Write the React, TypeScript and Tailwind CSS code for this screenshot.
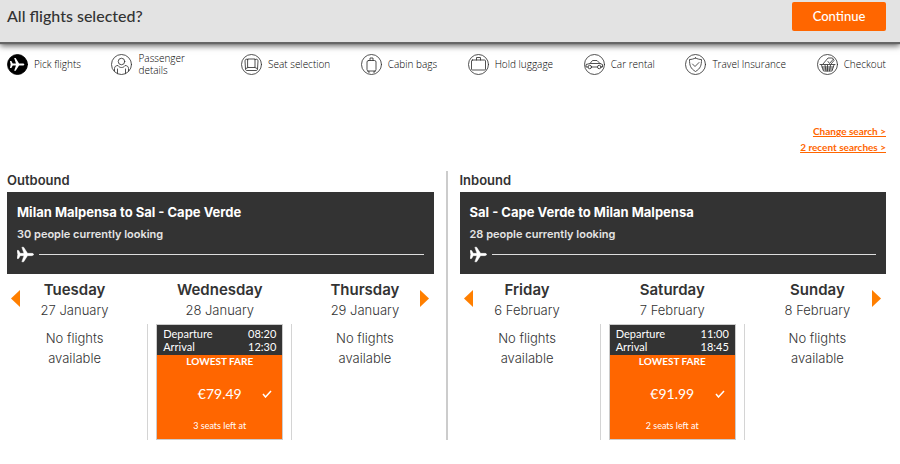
import type { ReactNode } from "react";

const PLANE =
  "M1 7h2l2 3.600h4.600L7 3h2.200l4.800 7.600h5.200c1.200 0 2.300.500 2.300 1.400s-1.100 1.400-2.300 1.400H14L9.200 21H7l2.600-7.600H5L3 17H1l1-5z";

function Plane({ className }: { className: string }) {
  return (
    <svg viewBox="1 2 21 20" className={className} fill="currentColor" stroke="currentColor" strokeWidth="0.600" aria-hidden="true">
      <path d={PLANE} />
    </svg>
  );
}

function RoundIcon({ children, filled = false }: { children?: ReactNode; filled?: boolean }) {
  return (
    <svg
      viewBox="0 0 42 42"
      className="size-[21px] shrink-0 text-[#333]"
      fill="none"
      stroke="currentColor"
      strokeWidth="1.700"
      strokeLinejoin="round"
      strokeLinecap="round"
      aria-hidden="true"
    >
      <circle cx="21" cy="21" r="20" fill={filled ? "#000" : "none"} stroke={filled ? "#000" : "currentColor"} />
      {children}
    </svg>
  );
}

const steps: { label: string; width?: string; icon: ReactNode }[] = [
  {
    label: "Pick flights",
    icon: (
      <RoundIcon filled>
        <path d={PLANE} transform="translate(4.500 4) scale(1.400)" fill="#fff" stroke="none" />
      </RoundIcon>
    ),
  },
  {
    label: "Passenger details",
    width: "w-[72px]",
    icon: (
      <RoundIcon>
        <circle cx="21" cy="15" r="6.500" />
        <path d="M7 34v-5c0-4 3-6 7-6 2 3 4 4 7 4s5-1 7-4c4 0 7 2 7 6v5M13 30v9M29 30v9" />
      </RoundIcon>
    ),
  },
  {
    label: "Seat selection",
    icon: (
      <RoundIcon>
        <path d="M14 10h14v17H14zM14 11c-4-2-6 0-6 3l1 16c0 2 1 3 3 3h18c2 0 3-1 3-3l1-16c0-3-2-5-6-3M10 29l4-2M32 29l-4-2" />
      </RoundIcon>
    ),
  },
  {
    label: "Cabin bags",
    icon: (
      <RoundIcon>
        <rect x="12" y="13" width="18" height="21" rx="3" />
        <path d="M18 13V8h6v5M14 34v2h3M28 34v2h-3" />
      </RoundIcon>
    ),
  },
  {
    label: "Hold luggage",
    icon: (
      <RoundIcon>
        <rect x="7" y="12" width="28" height="20" rx="2" />
        <path d="M17 12V7h8v5" />
      </RoundIcon>
    ),
  },
  {
    label: "Car rental",
    icon: (
      <RoundIcon>
        <path d="M8 26H4v-5l8-2 5-6h9l6 6 5 2v5h-3M15 26h12M13 19h19" />
        <circle cx="11.500" cy="26" r="3.500" />
        <circle cx="30.500" cy="26" r="3.500" />
      </RoundIcon>
    ),
  },
  {
    label: "Travel Insurance",
    icon: (
      <RoundIcon>
        <path d="M21 8c4 2 8 3 12 3 0 12-2 18-12 24C11 29 9 23 9 11c4 0 8-1 12-3zM15 20l5 5 8-8" />
      </RoundIcon>
    ),
  },
  {
    label: "Checkout",
    icon: (
      <RoundIcon>
        <path d="M6 21h30M9 22l4 12h17l4-12M10 26h22M12 30h19M16 22l2 12M21 22v12M27 22l-2 12M12 20L22 8h9l3 5-6 7M22 15l3 4 7-8" />
      </RoundIcon>
    ),
  },
];

type Flight = { departure: string; arrival: string; price: string; seats: string };
type Day = { name: string; date: string; flight?: Flight };

const journeys: { heading: string; route: string; looking: string; days: Day[] }[] = [
  {
    heading: "Outbound",
    route: "Milan Malpensa to Sal - Cape Verde",
    looking: "30 people currently looking",
    days: [
      { name: "Tuesday", date: "27 January" },
      {
        name: "Wednesday",
        date: "28 January",
        flight: { departure: "08:20", arrival: "12:30", price: "€79.49", seats: "3 seats left at" },
      },
      { name: "Thursday", date: "29 January" },
    ],
  },
  {
    heading: "Inbound",
    route: "Sal - Cape Verde to Milan Malpensa",
    looking: "28 people currently looking",
    days: [
      { name: "Friday", date: "6 February" },
      {
        name: "Saturday",
        date: "7 February",
        flight: { departure: "11:00", arrival: "18:45", price: "€91.99", seats: "2 seats left at" },
      },
      { name: "Sunday", date: "8 February" },
    ],
  },
];

function FlightCard({ flight }: { flight: Flight }) {
  return (
    <div className="border-x border-[#d4d4d4] px-2">
      <button
        type="button"
        className="block w-full border border-[#ccc] bg-[#ff6600] font-['Lato','Liberation_Sans',sans-serif] text-white"
      >
        <span className="grid h-[30px] grid-cols-[1fr_auto] content-center bg-[#333] px-[6px] text-left text-[11px] leading-[13px]">
          <span>Departure</span>
          <span className="text-right">{flight.departure}</span>
          <span>Arrival</span>
          <span className="text-right">{flight.arrival}</span>
        </span>
        <span className="block text-[10px] leading-3 font-bold">LOWEST FARE</span>
        <span className="grid h-[54px] grid-cols-[1fr_auto_1fr] items-center px-[10px] text-sm">
          <span className="col-start-2">{flight.price}</span>
          <svg
            viewBox="0 0 10 8"
            className="h-2 w-[10px] justify-self-end"
            fill="none"
            stroke="currentColor"
            strokeWidth="1.500"
            aria-hidden="true"
          >
            <path d="M1 4l2.500 3L9 1" />
          </svg>
        </span>
        <span className="block pb-2 text-[9px] leading-[10px]">{flight.seats}</span>
      </button>
    </div>
  );
}

function Arrow({ direction }: { direction: "previous" | "next" }) {
  const previous = direction === "previous";
  return (
    <button
      type="button"
      aria-label={previous ? "Previous days" : "Next days"}
      className={`absolute top-4 text-[#ff7f00] ${previous ? "left-[9px]" : "right-[9px]"}`}
    >
      <svg viewBox="0 0 9 17" className="h-[17px] w-[9px]" fill="currentColor" aria-hidden="true">
        <path d={previous ? "M9 0v17L0 8.500z" : "M0 0v17l9-8.500z"} />
      </svg>
    </button>
  );
}

export default function App() {
  return (
    <div className="min-h-screen bg-white font-['Inter','Liberation_Sans',sans-serif] text-[#333]">
      <header className="flex h-[42px] items-start justify-between bg-[#e3e3e3] pr-[14px] pl-[7px] shadow-[0_2px_1px_#666,0_4px_6px_rgba(0,0,0,0.600)]">
        <h1 className="pt-1 font-['Lato',sans-serif] text-base leading-6 font-medium">All flights selected?</h1>
        <button
          type="button"
          className="mt-[2px] h-[29px] w-[94px] rounded-xs bg-[#ff6600] font-['Lato',sans-serif] text-[13px] leading-none font-medium text-white"
        >
          Continue
        </button>
      </header>

      <nav aria-label="Booking steps" className="pt-[10px] pr-[14px] pl-[7px]">
        <ol className="flex h-6 items-center justify-between font-['Open_Sans',sans-serif] text-[10px] leading-3 font-light text-black">
          {steps.map((step) => (
            <li key={step.label} className="flex items-center gap-[6px]">
              {step.icon}
              <span className={step.width}>{step.label}</span>
            </li>
          ))}
        </ol>
      </nav>

      <div className="mt-[47px] flex flex-col items-end pr-[14px] font-['Lato',sans-serif] text-[10px] leading-4 font-bold text-[#ff6600] underline">
        <a href="#search">Change search &gt;</a>
        <a href="#recent">2 recent searches &gt;</a>
      </div>

      <main className="mt-4 grid grid-cols-[1fr_2px_1fr] gap-x-3 pr-[14px] pl-[7px]">
        {journeys.map((journey, index) => (
          <section key={journey.heading} className={index === 1 ? "col-start-3" : "col-start-1"}>
            <h2 className="h-[21px] text-[13px] leading-[18px] font-semibold">{journey.heading}</h2>
            <div className="h-[82px] bg-[#333] px-[10px] pt-[10px] text-white">
              <h3 className="text-[13px] leading-5 font-bold">{journey.route}</h3>
              <p className="pt-1 text-[11px] leading-4 font-semibold text-[#e5e5e5]">{journey.looking}</p>
              <div className="flex items-center gap-[5px] pt-1">
                <Plane className="size-[17px]" />
                <span className="h-px flex-1 bg-[#ddd]" />
              </div>
            </div>
            <div className="relative -mr-1 -ml-[5px]">
              <Arrow direction="previous" />
              <div className="grid grid-cols-3 pt-[6px] text-center text-[13px] leading-5">
                {journey.days.map((day) => (
                  <div key={day.name}>
                    <h4 className="text-[15px] leading-5 font-semibold">{day.name}</h4>
                    <p className="pb-1 leading-5 font-light">{day.date}</p>
                    {day.flight ? (
                      <FlightCard flight={day.flight} />
                    ) : (
                      <p className="mx-auto w-20 pt-1 leading-5 font-light">No flights available</p>
                    )}
                  </div>
                ))}
              </div>
              <Arrow direction="next" />
            </div>
          </section>
        ))}
        <div className="col-start-2 row-start-1 bg-[#ccc]" />
      </main>
    </div>
  );
}
